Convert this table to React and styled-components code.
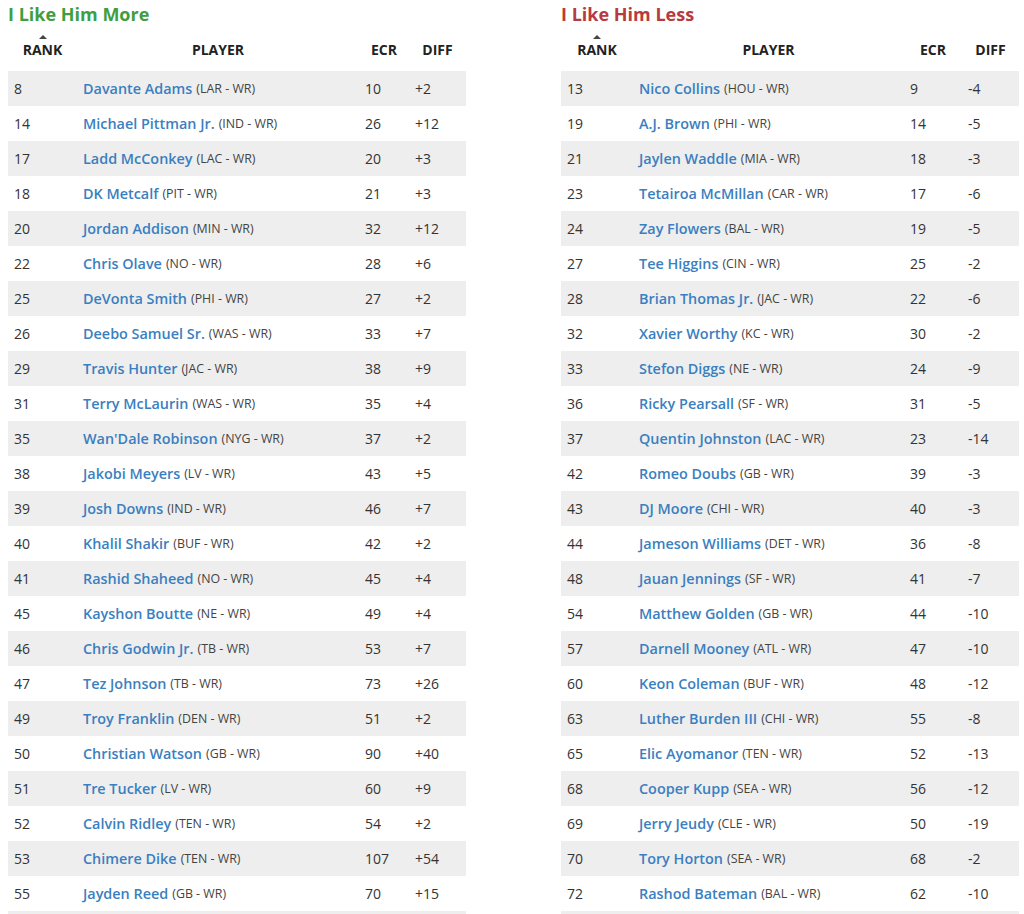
import React from 'react';
import styled, { createGlobalStyle } from 'styled-components';

const likeMore = [
    [8, 'Davante Adams', 'LAR', 10, '+2'],
    [14, 'Michael Pittman Jr.', 'IND', 26, '+12'],
    [17, 'Ladd McConkey', 'LAC', 20, '+3'],
    [18, 'DK Metcalf', 'PIT', 21, '+3'],
    [20, 'Jordan Addison', 'MIN', 32, '+12'],
    [22, 'Chris Olave', 'NO', 28, '+6'],
    [25, 'DeVonta Smith', 'PHI', 27, '+2'],
    [26, 'Deebo Samuel Sr.', 'WAS', 33, '+7'],
    [29, 'Travis Hunter', 'JAC', 38, '+9'],
    [31, 'Terry McLaurin', 'WAS', 35, '+4'],
    [35, "Wan'Dale Robinson", 'NYG', 37, '+2'],
    [38, 'Jakobi Meyers', 'LV', 43, '+5'],
    [39, 'Josh Downs', 'IND', 46, '+7'],
    [40, 'Khalil Shakir', 'BUF', 42, '+2'],
    [41, 'Rashid Shaheed', 'NO', 45, '+4'],
    [45, 'Kayshon Boutte', 'NE', 49, '+4'],
    [46, 'Chris Godwin Jr.', 'TB', 53, '+7'],
    [47, 'Tez Johnson', 'TB', 73, '+26'],
    [49, 'Troy Franklin', 'DEN', 51, '+2'],
    [50, 'Christian Watson', 'GB', 90, '+40'],
    [51, 'Tre Tucker', 'LV', 60, '+9'],
    [52, 'Calvin Ridley', 'TEN', 54, '+2'],
    [53, 'Chimere Dike', 'TEN', 107, '+54'],
    [55, 'Jayden Reed', 'GB', 70, '+15'],
];

const likeLess = [
    [13, 'Nico Collins', 'HOU', 9, '-4'],
    [19, 'A.J. Brown', 'PHI', 14, '-5'],
    [21, 'Jaylen Waddle', 'MIA', 18, '-3'],
    [23, 'Tetairoa McMillan', 'CAR', 17, '-6'],
    [24, 'Zay Flowers', 'BAL', 19, '-5'],
    [27, 'Tee Higgins', 'CIN', 25, '-2'],
    [28, 'Brian Thomas Jr.', 'JAC', 22, '-6'],
    [32, 'Xavier Worthy', 'KC', 30, '-2'],
    [33, 'Stefon Diggs', 'NE', 24, '-9'],
    [36, 'Ricky Pearsall', 'SF', 31, '-5'],
    [37, 'Quentin Johnston', 'LAC', 23, '-14'],
    [42, 'Romeo Doubs', 'GB', 39, '-3'],
    [43, 'DJ Moore', 'CHI', 40, '-3'],
    [44, 'Jameson Williams', 'DET', 36, '-8'],
    [48, 'Jauan Jennings', 'SF', 41, '-7'],
    [54, 'Matthew Golden', 'GB', 44, '-10'],
    [57, 'Darnell Mooney', 'ATL', 47, '-10'],
    [60, 'Keon Coleman', 'BUF', 48, '-12'],
    [63, 'Luther Burden III', 'CHI', 55, '-8'],
    [65, 'Elic Ayomanor', 'TEN', 52, '-13'],
    [68, 'Cooper Kupp', 'SEA', 56, '-12'],
    [69, 'Jerry Jeudy', 'CLE', 50, '-19'],
    [70, 'Tory Horton', 'SEA', 68, '-2'],
    [72, 'Rashod Bateman', 'BAL', 62, '-10'],
];

const GlobalStyle = createGlobalStyle`
    body {
        margin: 0;
        background: #fff;
        font-family: "Open Sans", "Liberation Sans", sans-serif;
        color: #333;
        overflow: hidden;
    }
`;

const Page = styled.div`
    display: grid;
    grid-template-columns: 458px 458px;
    column-gap: 95px;
    padding: 2px 0 0 8px;
    height: 914px;
    overflow: hidden;
`;

const Title = styled.h2`
    margin: 0 0 2px;
    font-size: 18px;
    line-height: 24px;
    font-weight: 700;
    color: ${props => props.color};
`;

const Grid = styled.div`
    display: grid;
    grid-template-columns: ${props => props.cols};
`;

const HeadCell = styled.div`
    height: 43px;
    display: flex;
    flex-direction: column;
    align-items: center;
    padding-top: 7px;
    box-sizing: border-box;
    font-size: 14px;
    line-height: 16px;
    font-weight: 700;
    color: #222;
`;

const SortArrow = styled.span`
    width: 0;
    height: 0;
    border-left: 4px solid transparent;
    border-right: 4px solid transparent;
    border-bottom: 4px solid #444;
    margin-bottom: 3px;
    visibility: ${props => (props.show ? 'visible' : 'hidden')};
`;

const Cell = styled.div`
    height: 35px;
    display: flex;
    align-items: center;
    padding-left: 6px;
    font-size: 14px;
    white-space: nowrap;
    background: ${props => (props.shade ? '#eeeeee' : 'transparent')};
    color: #333;
`;

const Name = styled.a`
    color: #3a7fc0;
    font-size: 14.4px;
    font-weight: 600;
    text-decoration: none;
    margin-right: 4px;
`;

const Team = styled.span`
    font-size: 12.4px;
    color: #444;
`;

const RankTable = ({ title, color, cols, rows }) => (
    <div>
        <Title color={color}>{title}</Title>
        <Grid cols={cols}>
            <HeadCell><SortArrow show />RANK</HeadCell>
            <HeadCell><SortArrow />PLAYER</HeadCell>
            <HeadCell><SortArrow />ECR</HeadCell>
            <HeadCell><SortArrow />DIFF</HeadCell>
            {rows.map(([rank, name, team, ecr, diff], i) => {
                const shade = i % 2 === 0;
                return (
                    <React.Fragment key={name}>
                        <Cell shade={shade}>{rank}</Cell>
                        <Cell shade={shade}>
                            <Name href="#">{name}</Name>
                            <Team>({team} - WR)</Team>
                        </Cell>
                        <Cell shade={shade}>{ecr}</Cell>
                        <Cell shade={shade}>{diff}</Cell>
                    </React.Fragment>
                );
            })}
            <Cell shade />
            <Cell shade />
            <Cell shade />
            <Cell shade />
        </Grid>
    </div>
);

const App = () => (
    <>
        <GlobalStyle />
        <Page>
            <RankTable
                title="I Like Him More"
                color="#3f9e3f"
                cols="69px 282px 50px 57px"
                rows={likeMore}
            />
            <RankTable
                title="I Like Him Less"
                color="#b73a40"
                cols="72px 271px 58px 57px"
                rows={likeLess}
            />
        </Page>
    </>
);

export default App;
